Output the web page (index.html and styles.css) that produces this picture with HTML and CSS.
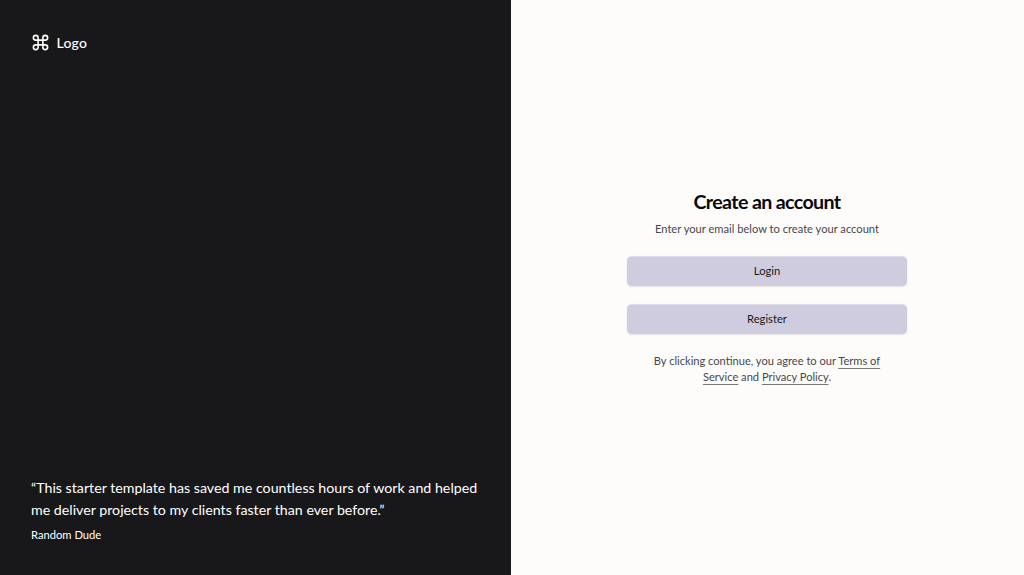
FILE: index.html
```html
<!DOCTYPE html>
<html lang="en">
<head>
<meta charset="utf-8">
<title>Create an account</title>
<link rel="stylesheet" href="styles.css">
</head>
<body>
<div class="page">
  <aside class="brand-panel">
    <div class="brand">
      <svg class="brand-icon" viewBox="0 0 24 24" fill="none" stroke="currentColor" stroke-width="2" stroke-linecap="round" stroke-linejoin="round"><path d="M15 6v12a3 3 0 1 0 3-3H6a3 3 0 1 0 3 3V6a3 3 0 1 0-3 3h12a3 3 0 1 0-3-3"/></svg>
      <span>Logo</span>
    </div>
    <blockquote class="quote">
      <p class="quote-text">“This starter template has saved me countless hours of work and helped me deliver projects to my clients faster than ever before.”</p>
      <footer class="quote-author">Random Dude</footer>
    </blockquote>
  </aside>
  <main class="account">
    <div class="card">
      <header class="heading">
        <h1 class="title">Create an account</h1>
        <p class="subtitle">Enter your email below to create your account</p>
      </header>
      <button class="button" type="button">Login</button>
      <button class="button" type="button">Register</button>
      <p class="terms">By clicking continue, you agree to our <a class="link" href="#">Terms of Service</a> and <a class="link" href="#">Privacy Policy</a>.</p>
    </div>
  </main>
</div>
</body>
</html>
```
FILE: styles.css
```css
* { box-sizing: border-box; margin: 0; padding: 0; }
body { font-family: Lato, "Liberation Sans", sans-serif; color: #09090b; background: #fefcfb; }
.page { display: grid; grid-template-columns: 511px 512px; height: 575px; }
.brand-panel { display: flex; flex-direction: column; justify-content: space-between; padding: 31px 31px 32px; background: #18181b; color: #fff; }
.brand { display: flex; align-items: center; gap: 6.5px; font-size: 14px; line-height: 24px; font-weight: 500; letter-spacing: 0.2px; }
.brand-icon { width: 19px; height: 19px; margin-top: -2px; }
.quote-text { font-size: 14.23px; line-height: 22px; }
.quote-author { margin-top: 6px; font-size: 11.2px; line-height: 16px; }
.account { display: flex; align-items: flex-start; justify-content: center; padding-top: 188px; }
.card { display: flex; flex-direction: column; gap: 18px; width: 280px; }
.heading { margin-bottom: 1px; text-align: center; }
.title { font-size: 19.6px; line-height: 28px; font-weight: 700; letter-spacing: -0.62px; }
.subtitle { margin-top: 5px; font-size: 11.15px; line-height: 16px; color: #47474b; }
.button { height: 30px; padding-bottom: 2px; border: 0; border-top: 1px solid #dddae8; border-radius: 5px; background: #d0cce0; color: #18181b; font: 11.2px/16px Lato, sans-serif; box-shadow: 0 0 1px rgba(0,0,0,.1), 0 1px 2px rgba(0,0,0,.1); }
.terms { margin-top: 1px; padding: 0 24px; font-size: 11.1px; line-height: 16px; text-align: center; color: #47474b; }
.link { color: inherit; text-underline-offset: 3px; text-decoration-color: #77777a; }
```
